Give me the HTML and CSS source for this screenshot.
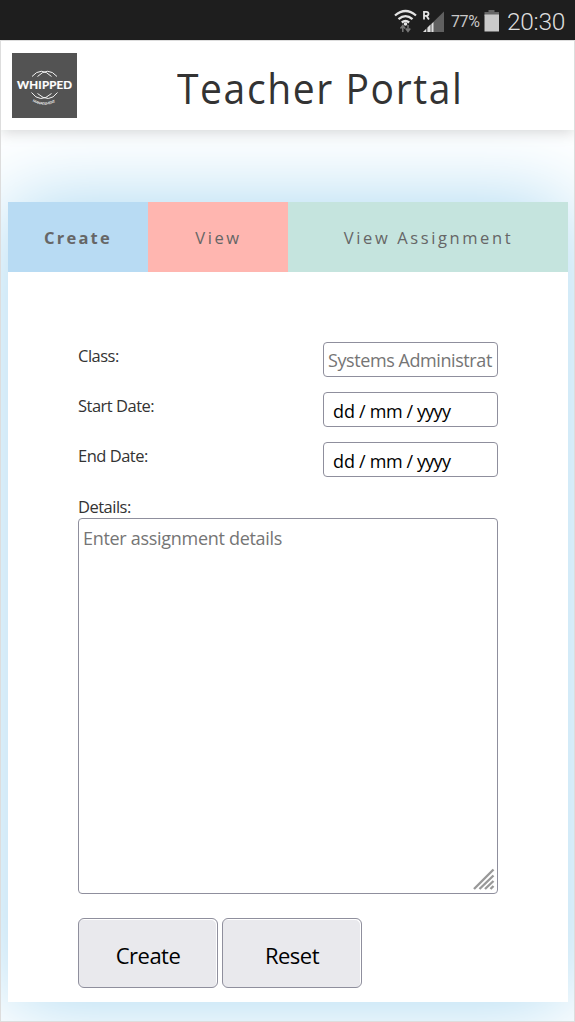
FILE: index.html
```html
<!DOCTYPE html>
<html lang="en">
<head>
<meta charset="utf-8">
<title>Teacher Portal</title>
<link rel="stylesheet" href="styles.css">
</head>
<body>
<div class="status">
  <svg class="status-icons" width="60" height="24" viewBox="0 0 60 24">
    <g fill="none" stroke="#e4e4e4" stroke-width="2.300">
      <path d="M2 6.500Q12.500-2.500 23 6.500"/>
      <path d="M5.500 10.200Q12.500 4 19.500 10.200"/>
      <path d="M8.800 13.500Q12.500 10.500 16.200 13.500"/>
    </g>
    <circle cx="12.500" cy="15" r="1.800" fill="#e4e4e4"/>
    <path d="M9.800 23v-6M7.500 19.500l2.300-3 2.300 3M15 16v6M12.800 19.500l2.200 3 2.200-3" fill="none" stroke="#777" stroke-width="1.500"/>
    <path d="M51 2.500V23H30z" fill="#606060"/>
    <path d="M30 23l3-3v3zM34.500 23v-4.500l3-3V23zM38.500 23v-8l2-2V23z" fill="#dedede"/>
    <path d="M31 10.500V2.800h2.300q2.200 0 2.200 2t-2.200 2H31m2.500 0 2.400 3.700" fill="none" stroke="#e4e4e4" stroke-width="1.800"/>
  </svg>
  <span class="percent">77%</span>
  <svg class="battery" width="16" height="22" viewBox="0 0 16 22">
    <path d="M4.500 0h6v2H15v4H.5V2h4z" fill="#666"/>
    <path d="M.5 4.500H15V21.500H.5z" fill="#cacaca"/>
  </svg>
  <span class="clock">20:30</span>
</div>
<div class="page">
  <header class="header">
    <svg class="logo" width="65" height="65" viewBox="0 0 65 65">
      <rect width="65" height="65" fill="#535353"/>
      <g fill="none" stroke="#f3f3f3" stroke-width="1">
        <path d="M20 23.500Q29 13 39.500 23.500M25.500 23.500Q36 13 45 23.500"/>
        <path d="M19.500 39.500Q28 51 39.500 40.500M25.500 40.500Q37 51 45.500 39.500"/>
      </g>
      <text class="logo-name" x="5" y="36" textLength="55">WHIPPED</text>
      <path id="arc" d="M20.500 48.500Q32.500 55 44.500 48.500" fill="none"/>
      <text class="logo-sub"><textPath href="#arc" textLength="24">MANAGEMENT</textPath></text>
    </svg>
    <h1 class="title">Teacher Portal</h1>
  </header>
  <main class="card">
    <nav class="tabs">
      <a class="tab tab-create">Create</a>
      <a class="tab tab-view">View</a>
      <a class="tab tab-assignment">View Assignment</a>
    </nav>
    <form class="form">
      <div class="row"><span class="label">Class:</span><span class="field"><span class="placeholder">Systems Administrat</span></span></div>
      <div class="row"><span class="label">Start Date:</span><span class="field date"><span>dd</span><span>/</span><span class="mm">mm</span><span>/</span><span class="yyyy">yyyy</span></span></div>
      <div class="row"><span class="label">End Date:</span><span class="field date"><span>dd</span><span>/</span><span class="mm">mm</span><span>/</span><span class="yyyy">yyyy</span></span></div>
      <div class="label details">Details:</div>
      <div class="area"><span>Enter assignment details</span>
        <svg class="grip" width="22" height="22" viewBox="0 0 22 22"><path d="M1 21 20.500 1.500M6.500 21l14-13.500M12 21l8.500-8M17.500 21l3-3" stroke="#999" stroke-width="2.400"/></svg>
      </div>
      <div class="buttons"><button type="button" class="button">Create</button><button type="button" class="button">Reset</button></div>
    </form>
  </main>
</div>
</body>
</html>
```
FILE: styles.css
```css
* { box-sizing: border-box; }
body { margin: 0; width: 575px; height: 1022px; overflow: hidden; background: #fff; color: #333; font-family: "Open Sans", sans-serif; }
.status { height: 40px; background: #1e1e1e; display: flex; align-items: flex-start; padding: 9px 9px 0 393px; color: #c8c8c8; font-family: Roboto, sans-serif; white-space: nowrap; }
.status-icons { flex: none; }
.percent { flex: none; width: 31px; margin-left: -2px; margin-right: 1px; padding-top: 4px; font-size: 16px; line-height: 18px; letter-spacing: -.4px; }
.battery { flex: none; margin: 1px 0 0 1px; }
.clock { flex: none; margin-left: 7px; font-size: 24.500px; line-height: 26px; font-weight: 300; letter-spacing: -.3px; color: #dedede; }
.page { height: 982px; border: 1px solid #ddd; overflow: hidden; display: flex; flex-direction: column; }
.header { position: relative; z-index: 1; flex: none; height: 89px; padding: 12px 0 0 11px; display: flex; background: #fff; box-shadow: 0 2px 14px rgba(0, 0, 0, .17); }
.logo { flex: none; }
.logo-name { fill: #fff; font: 700 11.500px Lato, sans-serif; stroke: #fff; stroke-width: .2px; }
.logo-sub { fill: #eee; font: 700 3.500px Lato, sans-serif; }
.title { margin: -6px 0 0 100px; font-size: 42px; line-height: 82px; height: 82px; font-weight: 400; letter-spacing: 1.700px; white-space: nowrap; transform: scaleX(.93); transform-origin: left; }
.card { flex: none; margin: 72px 6px 0 7px; height: 800px; background: #fff; box-shadow: 0 0 80px #a6d6f0; }
.tabs { display: grid; grid-template-columns: 140px 140px 280px; height: 70px; }
.tab { display: flex; align-items: center; justify-content: center; color: #666; font-size: 16.500px; letter-spacing: 2.600px; padding-top: 1px; padding-left: 1px; white-space: nowrap; }
.tab-create { background: #b8dbf3; font-weight: 700; letter-spacing: 2.200px; padding-left: 0; }
.tab-view { background: #ffb6b0; }
.tab-assignment { background: #c5e4de; }
.form { padding: 70px 70px 0; }
.row { display: flex; justify-content: space-between; height: 35px; margin-bottom: 15px; }
.label { font-size: 16.500px; line-height: 28px; letter-spacing: -.5px; white-space: nowrap; }
.field { width: 175px; height: 35px; border: 1px solid #8f8f9d; border-radius: 4px; padding: 1px 4px 0; font-size: 18px; line-height: 33px; white-space: nowrap; overflow: hidden; }
.placeholder { color: #757575; letter-spacing: -.42px; }
.date { display: flex; gap: 4px; padding: 2px 9px 0; color: #000; }
.mm { letter-spacing: -.3px; }
.yyyy { letter-spacing: -.7px; }
.details { height: 26px; line-height: 30px; }
.area { position: relative; height: 376px; border: 1px solid #8f8f9d; border-radius: 4px; padding: 4px; color: #757575; font-size: 18px; line-height: 30px; letter-spacing: -.3px; white-space: nowrap; }
.grip { position: absolute; right: 2px; bottom: 3px; }
.buttons { display: flex; gap: 4px; padding-top: 24px; }
.button { width: 140px; height: 70px; border: 1px solid #8f8f9d; border-radius: 6px; background: #e9e9ed; color: #000; font: 22px "Open Sans", sans-serif; padding: 3px 0 0; letter-spacing: -.5px; box-shadow: inset -1px 1px 0 #fff; }
```
